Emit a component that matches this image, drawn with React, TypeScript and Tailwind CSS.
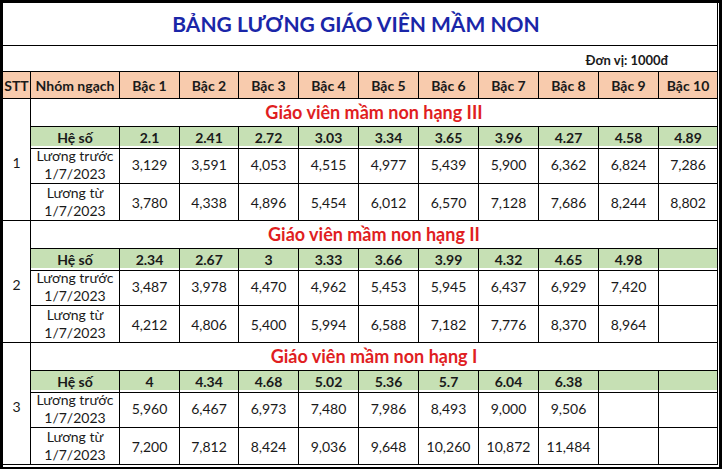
const bacCols = ['Bậc 1', 'Bậc 2', 'Bậc 3', 'Bậc 4', 'Bậc 5', 'Bậc 6', 'Bậc 7', 'Bậc 8', 'Bậc 9', 'Bậc 10'];

const sections = [
  {
    stt: '1',
    title: 'Giáo viên mầm non hạng III',
    heSo: ['2.1', '2.41', '2.72', '3.03', '3.34', '3.65', '3.96', '4.27', '4.58', '4.89'],
    truoc: ['3,129', '3,591', '4,053', '4,515', '4,977', '5,439', '5,900', '6,362', '6,824', '7,286'],
    tu: ['3,780', '4,338', '4,896', '5,454', '6,012', '6,570', '7,128', '7,686', '8,244', '8,802'],
  },
  {
    stt: '2',
    title: 'Giáo viên mầm non hạng II',
    heSo: ['2.34', '2.67', '3', '3.33', '3.66', '3.99', '4.32', '4.65', '4.98', ''],
    truoc: ['3,487', '3,978', '4,470', '4,962', '5,453', '5,945', '6,437', '6,929', '7,420', ''],
    tu: ['4,212', '4,806', '5,400', '5,994', '6,588', '7,182', '7,776', '8,370', '8,964', ''],
  },
  {
    stt: '3',
    title: 'Giáo viên mầm non hạng I',
    heSo: ['4', '4.34', '4.68', '5.02', '5.36', '5.7', '6.04', '6.38', '', ''],
    truoc: ['5,960', '6,467', '6,973', '7,480', '7,986', '8,493', '9,000', '9,506', '', ''],
    tu: ['7,200', '7,812', '8,424', '9,036', '9,648', '10,260', '10,872', '11,484', '', ''],
  },
];

const rowGrid = 'grid grid-cols-[89px_60px_59px_60px_60px_60px_60px_60px_60px_60px_59px]';
const cell = 'flex items-center justify-center border-r border-b border-black';

function Section({ s }: { s: (typeof sections)[number] }) {
  return (
    <div className="flex">
      <div className="w-[28px] flex items-center justify-center pt-[6px] border-r border-b border-black text-[14px]">
        {s.stt}
      </div>
      <div className="w-[687px] flex flex-col">
        <div className="h-[28px] flex items-center justify-center border-r border-b border-black text-[18px] font-bold text-[#e01e22]">
          {s.title}
        </div>
        <div className={`${rowGrid} h-[19px] bg-[#c6e0b4] font-bold text-[14px]`}>
          <div className={cell}>Hệ số</div>
          {s.heSo.map((v, i) => (
            <div key={i} className={cell}>{v}</div>
          ))}
        </div>
        <div className={`${rowGrid} h-[38px] text-[14px]`}>
          <div className={`${cell} flex-col leading-[18px]`}>
            <span>Lương trước</span>
            <span>1/7/2023</span>
          </div>
          {s.truoc.map((v, i) => (
            <div key={i} className={cell}>{v}</div>
          ))}
        </div>
        <div className={`${rowGrid} h-[37px] text-[14px]`}>
          <div className={`${cell} flex-col leading-[18px]`}>
            <span>Lương từ</span>
            <span>1/7/2023</span>
          </div>
          {s.tu.map((v, i) => (
            <div key={i} className={cell}>{v}</div>
          ))}
        </div>
      </div>
    </div>
  );
}

export default function App() {
  return (
    <div className="w-[722px] h-[476px] bg-white font-['Lato',sans-serif] text-[#1a1a1a]">
      <div className="w-[722px] border-t-[3px] border-l-[3px] border-r-[3px] border-b-2 border-black pr-[1px] pb-[2px]">
        <div className="w-[715px] flex flex-col">
          <div className="h-[43px] flex items-center justify-center pr-[8px] border-r border-b border-black text-[21px] font-bold text-[#1a26a8]">
            BẢNG LƯƠNG GIÁO VIÊN MẦM NON
          </div>
          <div className="h-[26px] flex items-end justify-end pr-[49px] pb-[1px] border-r border-b border-black text-[13px] font-bold">
            Đơn vị: 1000đ
          </div>
          <div className="flex h-[27px] bg-[#f8cbad] font-bold text-[14px]">
            <div className="w-[28px] flex items-end justify-center pb-[2px] border-r border-b border-black">STT</div>
            <div className={`w-[687px] ${rowGrid}`}>
              <div className={cell}>Nhóm ngạch</div>
              {bacCols.map((b) => (
                <div key={b} className={cell}>{b}</div>
              ))}
            </div>
          </div>
          {sections.map((s) => (
            <Section key={s.stt} s={s} />
          ))}
        </div>
      </div>
    </div>
  );
}
